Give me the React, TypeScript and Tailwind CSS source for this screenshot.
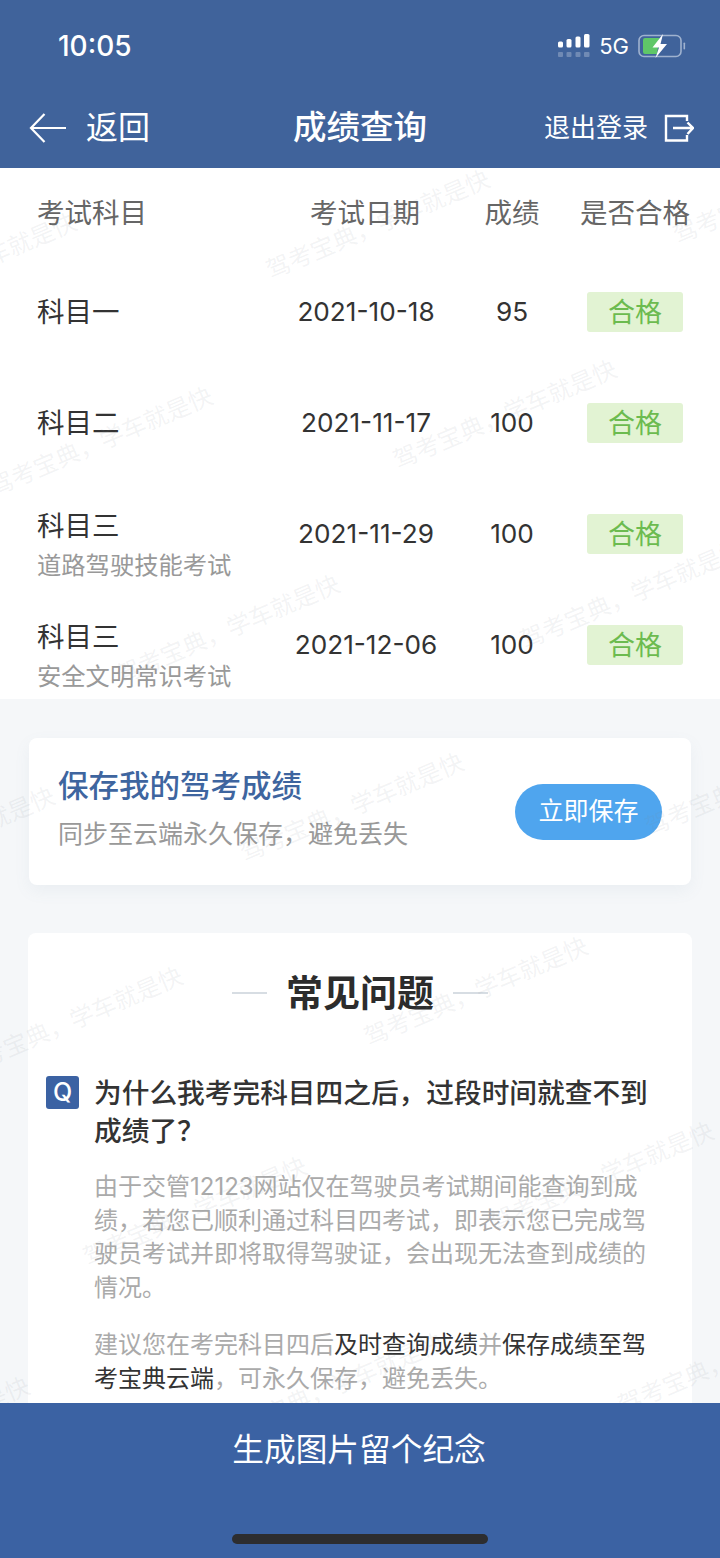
import React from "react";

const CJK = "font-['Inter','Noto_Sans_CJK_SC',sans-serif]";

const rows = [
  { name: "科目一", date: "2021-10-18", score: "95" },
  { name: "科目二", date: "2021-11-17", score: "100" },
  { name: "科目三", sub: "道路驾驶技能考试", date: "2021-11-29", score: "100" },
  { name: "科目三", sub: "安全文明常识考试", date: "2021-12-06", score: "100" },
];

const marks = [
  [378, 225], [-35, 268], [101, 442], [505, 415], [785, 190], [632, 595], [228, 630],
  [352, 808], [-57, 842], [757, 782], [476, 992], [71, 1022], [602, 1177], [195, 1212],
  [-82, 1432], [332, 1388], [730, 1360],
];

function Signal() {
  return (
    <svg width="34" height="26" viewBox="0 0 34 26" fill="#fff">
      <rect x="1" y="8.5" width="5" height="6" rx="1.5" />
      <rect x="9.5" y="6" width="5" height="8.5" rx="1.5" />
      <rect x="18.5" y="3.5" width="5" height="11" rx="1.5" />
      <rect x="27" y="1" width="5.5" height="13.5" rx="1.5" />
      <g opacity="0.25">
        <rect x="1" y="19" width="5" height="5" rx="1" />
        <rect x="9.5" y="19" width="5" height="5" rx="1" />
        <rect x="18.5" y="19" width="5" height="5" rx="1" />
        <rect x="27" y="19" width="5.5" height="5" rx="1" />
      </g>
    </svg>
  );
}

function Battery() {
  return (
    <svg width="48" height="26" viewBox="0 0 48 26">
      <rect x="1" y="2.5" width="42" height="21" rx="5" fill="none" stroke="#9fb2cf" strokeWidth="1.6" />
      <path d="M5 7a2 2 0 0 1 2-2h15l-6 9h4l-1 7H7a2 2 0 0 1-2-2z" fill="#5fc768" />
      <path d="M25 1 14.5 14.5h6.5L17.5 25 29 11h-6.5z" fill="#fff" />
      <rect x="45.5" y="9.5" width="1.6" height="7" rx="0.8" fill="#9fb2cf" />
    </svg>
  );
}

function BackArrow() {
  return (
    <svg width="38" height="32" viewBox="0 0 38 32" fill="none" stroke="#fff" strokeWidth="2.2">
      <path d="M15.5 2 2 16l13.5 14M2 16h35" />
    </svg>
  );
}

function Logout() {
  return (
    <svg width="30" height="28" viewBox="0 0 30 28" fill="none" stroke="#fff" strokeWidth="2.4">
      <path d="M23 7V2H2v24.500h21V21" />
      <path d="M9 14h20M23.500 8.500 29 14l-5.500 6" />
    </svg>
  );
}

export default function App() {
  return (
    <div className={`relative flex h-[1558px] w-[720px] flex-col overflow-hidden bg-[#f5f7f9] ${CJK}`}>
      <header className="relative z-20 h-[168px] shrink-0 bg-[#40639b] text-white">
        <div className="flex h-[92px] items-center pl-[58px] pr-[34px]">
          <span className="text-[28px] font-medium leading-none">10:05</span>
          <div className="ml-auto flex items-center">
            <Signal />
            <span className="ml-[8px] text-[22px] leading-none">5G</span>
            <span className="ml-[9px]"><Battery /></span>
          </div>
        </div>
        <div className="grid h-[72px] grid-cols-[1fr_auto_1fr] items-center px-[29px]">
          <div className="flex items-center">
            <BackArrow />
            <span className="ml-[19px] text-[32px] leading-none">返回</span>
          </div>
          <span className="text-[33.500px] font-medium leading-none">成绩查询</span>
          <div className="-mr-[3px] flex items-center justify-end">
            <span className="text-[26px] leading-none">退出登录</span>
            <span className="ml-[16px] flex"><Logout /></span>
          </div>
        </div>
      </header>

      <main className="min-h-0 flex-1 overflow-hidden">
        <section className="h-[531px] overflow-hidden bg-white">
          <div className="grid h-[88px] grid-cols-[252px_152px_140px_106px] items-center pl-[38px] pt-[3px] text-[27.500px] leading-none text-[#666]">
            <span className="-ml-px">考试科目</span>
            <span className="-ml-[2px] text-center">考试日期</span>
            <span className="text-center">成绩</span>
            <span className="flex justify-center whitespace-nowrap">是否合格</span>
          </div>
          {rows.map((r, i) => (
            <div key={i} className="grid h-[111px] grid-cols-[252px_152px_140px_106px] items-center pl-[38px] pt-[1px] text-[#333]">
              <div className={r.sub ? "-ml-px mt-[23px]" : "-ml-px"}>
                <div className="text-[27.500px] leading-[40px]">{r.name}</div>
                {r.sub && <div className="-mt-px text-[24.300px] leading-[40px] text-[#999]">{r.sub}</div>}
              </div>
              <span className="text-center text-[26.200px] leading-none">{r.date}</span>
              <span className="text-center text-[26.200px] leading-none">{r.score}</span>
              <span className="flex justify-center">
                <span className="flex h-[40px] w-[96px] items-center justify-center rounded-[3px] bg-[#e2f3d3] text-[27px] leading-none text-[#6cbb4f]">合格</span>
              </span>
            </div>
          ))}
        </section>

        <section className="mx-[29px] mt-[39px] flex h-[147px] items-center justify-between rounded-[8px] bg-white pl-[29px] pr-[29px] shadow-[0_6px_16px_rgba(120,135,160,0.08)]">
          <div className="-mt-[4px]">
            <div className="text-[30.500px] font-medium leading-[40px] text-[#3e659f]">保存我的驾考成绩</div>
            <div className="mt-[8px] text-[25px] leading-[40px] text-[#999]">同步至云端永久保存，避免丢失</div>
          </div>
          <div className="flex h-[56px] w-[147px] items-center justify-center rounded-full bg-[#4fa5ee] text-[25px] leading-none text-white">立即保存</div>
        </section>

        <section className="mx-[28px] mt-[48px] rounded-t-[8px] bg-white pb-[60px] pt-[36px]">
          <div className="flex h-[48px] items-center justify-center">
            <span className="h-[2px] w-[35px] bg-[#d7dde3]" />
            <span className="mx-[19px] text-[37px] font-bold leading-none text-[#2c2c2c]">常见问题</span>
            <span className="h-[2px] w-[35px] bg-[#d7dde3]" />
          </div>
          <div className="mt-[56px] flex pl-[18px] pr-[30px]">
            <span className="mt-[3px] flex h-[33px] w-[33px] shrink-0 items-center justify-center rounded-[3px] bg-[#3b62a3] text-[25px] font-medium leading-none text-white">Q</span>
            <div className="ml-[15px] min-w-0">
              <div className="mt-[1px] w-[560px] text-[27.700px] font-medium leading-[38px] text-[#333]">为什么我考完科目四之后，过段时间就查不到成绩了？</div>
              <p className="mt-[20px] w-[555px] text-[24px] leading-[33.700px] text-[#aaa]">由于交管12123网站仅在驾驶员考试期间能查询到成绩，若您已顺利通过科目四考试，即表示您已完成驾驶员考试并即将取得驾驶证，会出现无法查到成绩的情况。</p>
              <p className="mt-[23px] w-[555px] text-[24px] leading-[33.700px] text-[#aaa]">建议您在考完科目四后<span className="text-[#333]">及时查询成绩</span>并<span className="text-[#333]">保存成绩至驾考宝典云端</span>，可永久保存，避免丢失。</p>
            </div>
          </div>
        </section>
      </main>

      <div className="pointer-events-none absolute left-0 top-0 z-10 h-full w-full">
        {marks.map(([x, y], i) => (
          <span
            key={i}
            className="absolute -translate-x-1/2 -translate-y-1/2 -rotate-[23deg] whitespace-nowrap text-[24px] leading-none text-[rgba(130,140,150,0.1)]"
            style={{ left: x, top: y }}
          >
            驾考宝典，学车就是快
          </span>
        ))}
      </div>

      <footer className="relative z-20 flex h-[155px] shrink-0 flex-col items-center bg-[#3b62a3] text-white">
        <div className="mt-[29px] -ml-[2px] text-[31.700px] leading-[36px]">生成图片留个纪念</div>
        <div className="mt-[66px] h-[10px] w-[256px] rounded-full bg-[#2d2d2f]" />
      </footer>
    </div>
  );
}
